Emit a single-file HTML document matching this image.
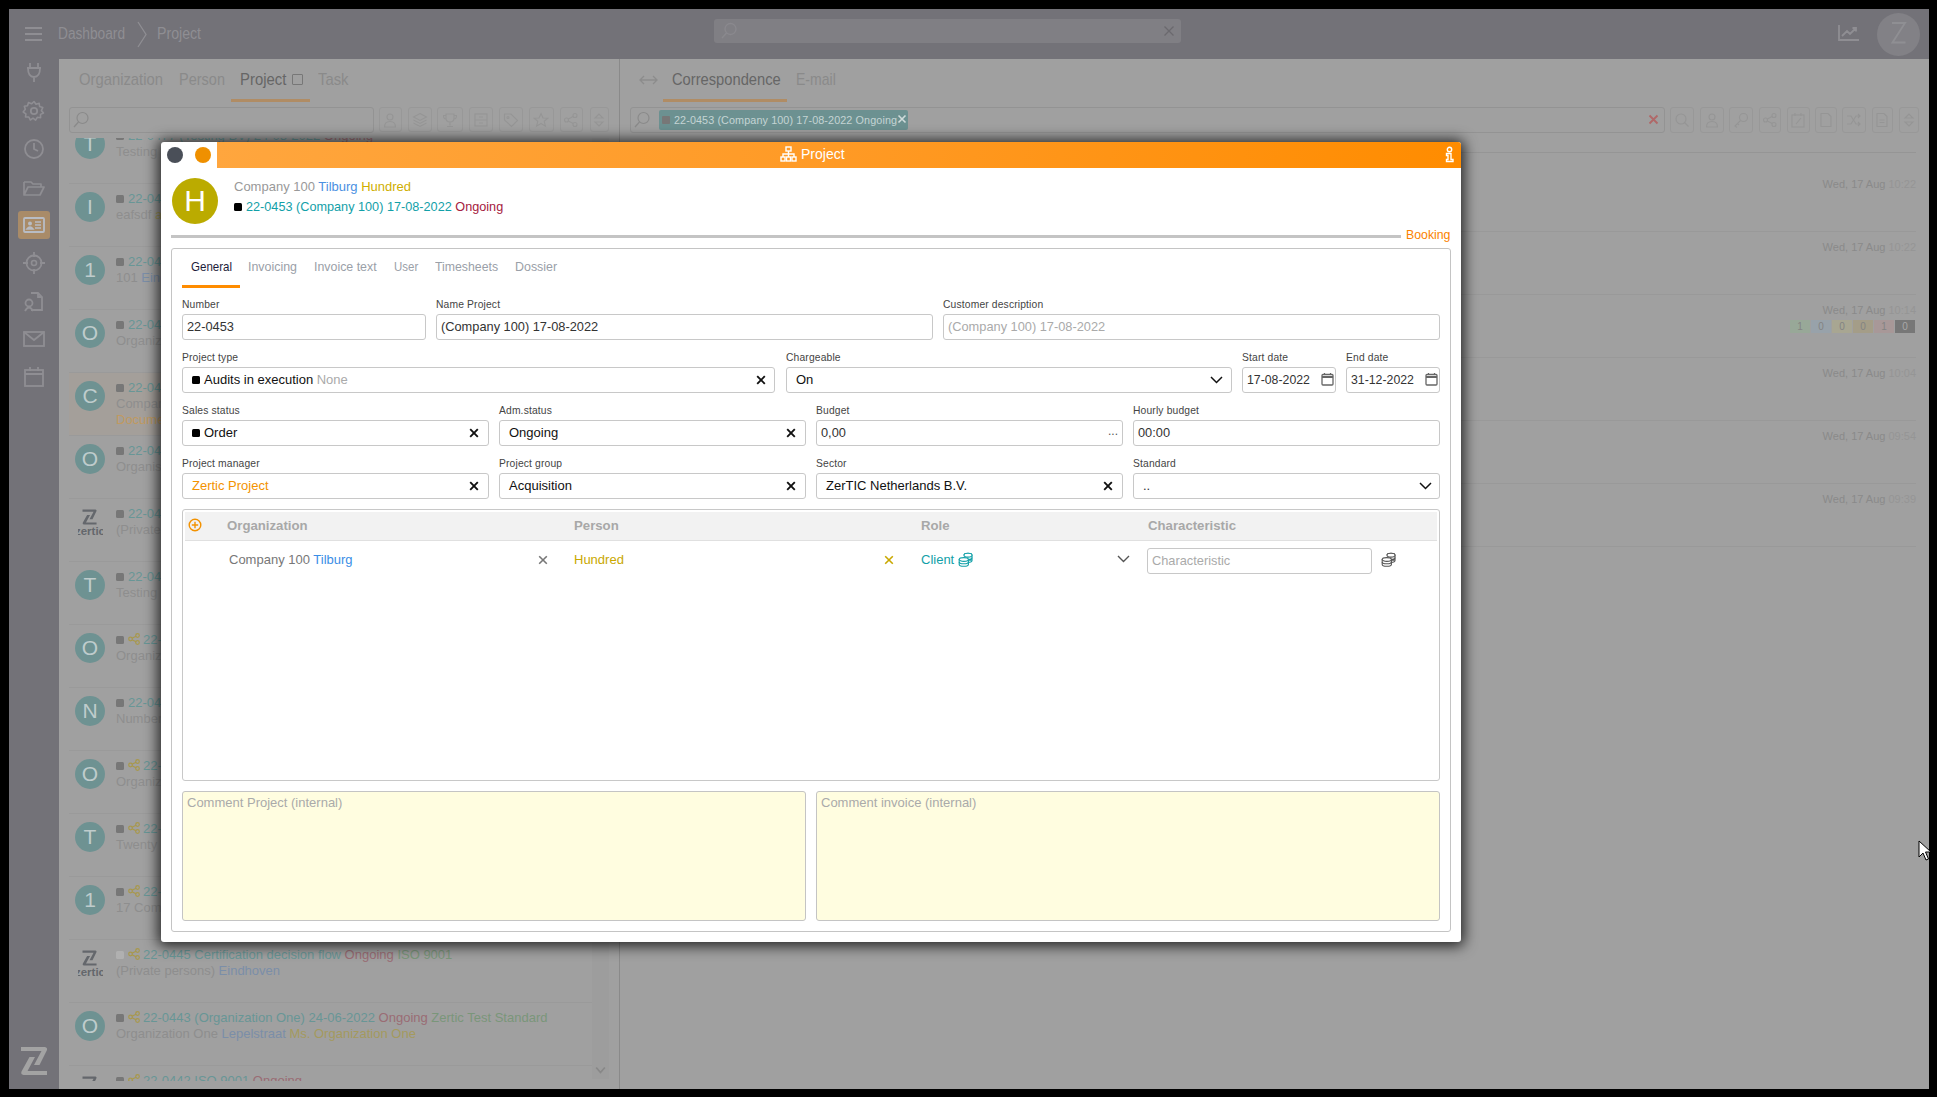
<!DOCTYPE html>
<html><head><meta charset="utf-8">
<style>
*{box-sizing:border-box;margin:0;padding:0}
html,body{width:1937px;height:1097px;overflow:hidden;background:#000;font-family:"Liberation Sans",sans-serif}
.a{position:absolute}
.nw{white-space:nowrap}
</style></head>
<body>
<div class="a" style="left:9px;top:9px;width:1920px;height:1080px;background:#a0a0a0"></div>
<!-- TOPBAR -->
<div class="a" style="left:9px;top:9px;width:1920px;height:50px;background:#737278"></div>
<div class="a" style="left:25px;top:27px;width:17px;height:2px;background:#8f8e93"></div>
<div class="a" style="left:25px;top:33px;width:17px;height:2px;background:#8f8e93"></div>
<div class="a" style="left:25px;top:39px;width:17px;height:2px;background:#8f8e93"></div>
<div class="a nw" style="left:58px;top:23.7px;font-size:16px;line-height:20px;color:#8f8e93;transform:scaleX(.856);transform-origin:left">Dashboard</div>
<svg class="a" style="left:136px;top:21px" width="12" height="27"><path d="M2 1 L10 13.5 L2 26" fill="none" stroke="#8f8e93" stroke-width="1.3"/></svg>
<div class="a nw" style="left:157px;top:23.7px;font-size:16px;line-height:20px;color:#8f8e93;transform:scaleX(.884);transform-origin:left">Project</div>
<div class="a" style="left:714px;top:19px;width:467px;height:24px;background:#807f84;border-radius:3px"></div>
<svg class="a" style="left:719px;top:21px" width="20" height="20"><circle cx="11.5" cy="8" r="5.5" fill="none" stroke="#8a898e" stroke-width="1.3"/><path d="M7.5 12 L3 17" stroke="#8a898e" stroke-width="1.4"/></svg>
<svg class="a" style="left:1163px;top:25px" width="12" height="12"><path d="M1.5 1.5 L10.5 10.5 M10.5 1.5 L1.5 10.5" stroke="#6a696e" stroke-width="1.3"/></svg>
<svg class="a" style="left:1837px;top:23px" width="24" height="20"><path d="M2 2 V17 H22" fill="none" stroke="#8f8e93" stroke-width="1.8"/><path d="M5 13 L10 8 L13 11 L19 5 M15.5 5 H19 V8.5" fill="none" stroke="#8f8e93" stroke-width="1.8"/></svg>
<div class="a" style="left:1877px;top:13px;width:43px;height:43px;border-radius:50%;background:#828186"></div>
<svg class="a" style="left:1877px;top:13px" width="43" height="43"><path d="M15 10 H28 L15.5 29.5 H28.5" fill="none" stroke="#8f8f93" stroke-width="1.9" stroke-linejoin="miter"/></svg>

<!-- SIDEBAR -->
<div class="a" style="left:9px;top:59px;width:50px;height:1030px;background:#737278"></div>
<svg class="a" style="left:22px;top:60px" width="24" height="24"><path d="M8 3 V8 M16 3 V8 M5 8 H19 M6 8 Q6 17 12 17 Q18 17 18 8 M12 17 V22" fill="none" stroke="#8f8e93" stroke-width="1.8"/></svg>
<svg class="a" style="left:22px;top:99px" width="24" height="24"><circle cx="12" cy="12" r="3.2" fill="none" stroke="#8f8e93" stroke-width="1.8"/><path d="M12 2.5 L14 5.2 L17.2 4.3 L17.6 7.5 L20.8 8.5 L19.4 11.6 L21.5 14 L18.5 15.4 L18.6 18.7 L15.3 18.3 L13.6 21.2 L11 19.2 L8.3 21 L6.8 18 L3.5 18 L3.9 14.8 L1.2 13 L3.3 10.3 L2.3 7.2 L5.5 6.7 L6.5 3.6 L9.5 4.8 Z" fill="none" stroke="#8f8e93" stroke-width="1.6" stroke-linejoin="round"/></svg>
<svg class="a" style="left:22px;top:137px" width="24" height="24"><circle cx="12" cy="12" r="9" fill="none" stroke="#8f8e93" stroke-width="1.8"/><path d="M12 6 V12 L16 14" fill="none" stroke="#8f8e93" stroke-width="1.8"/></svg>
<svg class="a" style="left:22px;top:176px" width="24" height="24"><path d="M2 6 H9 L11 8 H19 V11 M2 6 V19 H18 L22 11 H6 L2 19" fill="none" stroke="#8f8e93" stroke-width="1.7" stroke-linejoin="round"/></svg>
<div class="a" style="left:18px;top:211px;width:32px;height:28px;background:#a98b68;border-radius:3px"></div>
<svg class="a" style="left:22px;top:213px" width="24" height="24"><rect x="2" y="5" width="20" height="14" rx="1" fill="none" stroke="#b8bcc4" stroke-width="1.8"/><circle cx="8" cy="10.5" r="2" fill="#b8bcc4"/><path d="M5 16 Q8 12 11 16 Z M13 9 H19 M13 12 H19 M13 15 H19" stroke="#b8bcc4" stroke-width="1.6" fill="#b8bcc4"/></svg>
<svg class="a" style="left:22px;top:251px" width="24" height="24"><circle cx="12" cy="12" r="7.5" fill="none" stroke="#8f8e93" stroke-width="1.8"/><circle cx="12" cy="12" r="2.5" fill="none" stroke="#8f8e93" stroke-width="1.6"/><path d="M12 1 V6 M12 18 V23 M1 12 H6 M18 12 H23" stroke="#8f8e93" stroke-width="1.8"/></svg>
<svg class="a" style="left:22px;top:289px" width="24" height="24"><path d="M9 4 H16 L20 8 V21 H9 M16 4 V8 H20" fill="none" stroke="#8f8e93" stroke-width="1.8"/><circle cx="7" cy="14" r="3.5" fill="none" stroke="#8f8e93" stroke-width="1.8"/><path d="M3 22 Q7 15 11 22" fill="none" stroke="#8f8e93" stroke-width="1.8"/></svg>
<svg class="a" style="left:22px;top:327px" width="24" height="24"><rect x="2" y="5" width="20" height="14" fill="none" stroke="#8f8e93" stroke-width="1.8"/><path d="M2 5 L12 13 L22 5" fill="none" stroke="#8f8e93" stroke-width="1.8"/></svg>
<svg class="a" style="left:22px;top:365px" width="24" height="24"><rect x="3" y="5" width="18" height="16" fill="none" stroke="#8f8e93" stroke-width="1.8"/><path d="M3 9 H21 M8 2 V6 M16 2 V6" stroke="#8f8e93" stroke-width="1.8"/></svg>
<svg class="a" style="left:14px;top:1040px" width="40" height="40"><g fill="#a3a3a3"><path d="M7 7 H31 Q33.5 7.5 33 10 L25.5 25 H20 L27.5 11 H7 Z"/><path d="M15.5 17 H21 L13.5 31 H33 V35 H9.5 Q6.5 34.5 7.5 31.5 Z"/></g></svg>

<!-- LEFT PANEL -->
<div class="a" style="left:59px;top:138px;width:560px;height:943px;overflow:hidden">
<div class="a" style="left:10px;top:-18px;width:523px;height:1px;background:#9a9a9a"></div>
<div class="a" style="left:16px;top:-9px;width:30px;height:30px;border-radius:50%;background:#6e9292;color:#bfcccc;font-size:21px;line-height:30px;text-align:center">T</div>
<div class="a nw" style="left:57px;top:-10.5px;font-size:13px;line-height:16px"><span style="display:inline-block;width:8px;height:8px;border-radius:1.5px;background:#777;margin-right:4px;vertical-align:0px"></span><span style="color:#689696">22-0477 </span><span style="color:#689696">(Testing BV) 24-08-2022 </span><span style="color:#9a6c74">Ongoing</span></div>
<div class="a nw" style="left:57px;top:5.5px;font-size:13px;line-height:16px"><span style="color:#8e8e8e">Testing BV</span></div>
<div class="a" style="left:10px;top:45px;width:523px;height:1px;background:#9a9a9a"></div>
<div class="a" style="left:16px;top:54px;width:30px;height:30px;border-radius:50%;background:#6e9292;color:#bfcccc;font-size:21px;line-height:30px;text-align:center">I</div>
<div class="a nw" style="left:57px;top:52.5px;font-size:13px;line-height:16px"><span style="display:inline-block;width:8px;height:8px;border-radius:1.5px;background:#777;margin-right:4px;vertical-align:0px"></span><span style="color:#689696">22-0476 (eafsdf) 17-08-2022</span></div>
<div class="a nw" style="left:57px;top:68.5px;font-size:13px;line-height:16px"><span style="color:#8e8e8e">eafsdf </span><span style="color:#a49a5e">asdf</span></div>
<div class="a" style="left:10px;top:108px;width:523px;height:1px;background:#9a9a9a"></div>
<div class="a" style="left:16px;top:117px;width:30px;height:30px;border-radius:50%;background:#6e9292;color:#bfcccc;font-size:21px;line-height:30px;text-align:center">1</div>
<div class="a nw" style="left:57px;top:115.5px;font-size:13px;line-height:16px"><span style="display:inline-block;width:8px;height:8px;border-radius:1.5px;background:#777;margin-right:4px;vertical-align:0px"></span><span style="color:#689696">22-0475 (101 Eindhoven) 17-08-2022</span></div>
<div class="a nw" style="left:57px;top:131.5px;font-size:13px;line-height:16px"><span style="color:#8e8e8e">101 </span><span style="color:#7b8ea8">Eindhoven</span></div>
<div class="a" style="left:10px;top:171px;width:523px;height:1px;background:#9a9a9a"></div>
<div class="a" style="left:16px;top:180px;width:30px;height:30px;border-radius:50%;background:#6e9292;color:#bfcccc;font-size:21px;line-height:30px;text-align:center">O</div>
<div class="a nw" style="left:57px;top:178.5px;font-size:13px;line-height:16px"><span style="display:inline-block;width:8px;height:8px;border-radius:1.5px;background:#777;margin-right:4px;vertical-align:0px"></span><span style="color:#689696">22-0474 (Organization One) 17-08-2022</span></div>
<div class="a nw" style="left:57px;top:194.5px;font-size:13px;line-height:16px"><span style="color:#8e8e8e">Organization One</span></div>
<div class="a" style="left:10px;top:235px;width:533px;height:62px;background:#a49f9a"></div>
<div class="a" style="left:10px;top:234px;width:523px;height:1px;background:#9a9a9a"></div>
<div class="a" style="left:16px;top:243px;width:30px;height:30px;border-radius:50%;background:#6e9292;color:#bfcccc;font-size:21px;line-height:30px;text-align:center">C</div>
<div class="a nw" style="left:57px;top:241.5px;font-size:13px;line-height:16px"><span style="display:inline-block;width:8px;height:8px;border-radius:1.5px;background:#777;margin-right:4px;vertical-align:0px"></span><span style="color:#689696">22-0473 (Company 100) 17-08-2022</span></div>
<div class="a nw" style="left:57px;top:257.5px;font-size:13px;line-height:16px"><span style="color:#8e8e8e">Company 100</span></div>
<div class="a nw" style="left:57px;top:273.5px;font-size:13px;line-height:16px"><span style="color:#c09a60">Documents</span></div>
<div class="a" style="left:10px;top:297px;width:523px;height:1px;background:#9a9a9a"></div>
<div class="a" style="left:16px;top:306px;width:30px;height:30px;border-radius:50%;background:#6e9292;color:#bfcccc;font-size:21px;line-height:30px;text-align:center">O</div>
<div class="a nw" style="left:57px;top:304.5px;font-size:13px;line-height:16px"><span style="display:inline-block;width:8px;height:8px;border-radius:1.5px;background:#777;margin-right:4px;vertical-align:0px"></span><span style="color:#689696">22-0472 (Organisation) 17-08-2022</span></div>
<div class="a nw" style="left:57px;top:320.5px;font-size:13px;line-height:16px"><span style="color:#8e8e8e">Organisation</span></div>
<div class="a" style="left:10px;top:360px;width:523px;height:1px;background:#9a9a9a"></div>
<svg class="a" style="left:23px;top:371px" width="16" height="16"><g fill="#64676c" transform="translate(0.5,0.5) scale(0.54) translate(-7,-7)"><path d="M7 7 H31 Q33.5 7.5 33 10 L25.5 25 H20 L27.5 11 H7 Z"/><path d="M15.5 17 H21 L13.5 31 H33 V35 H9.5 Q6.5 34.5 7.5 31.5 Z"/></g></svg>
<div class="a nw" style="left:18.5px;top:387px;width:25px;height:13px;overflow:hidden;text-align:center;font-size:11.5px;font-weight:700;line-height:13px;color:#64676c"><span style="margin-left:-5px;margin-right:-5px">zertic</span></div>
<div class="a nw" style="left:57px;top:367.5px;font-size:13px;line-height:16px"><span style="display:inline-block;width:8px;height:8px;border-radius:1.5px;background:#777;margin-right:4px;vertical-align:0px"></span><span style="color:#689696">22-0471 (Private persons)</span></div>
<div class="a nw" style="left:57px;top:383.5px;font-size:13px;line-height:16px"><span style="color:#8e8e8e">(Private persons)</span></div>
<div class="a" style="left:10px;top:423px;width:523px;height:1px;background:#9a9a9a"></div>
<div class="a" style="left:16px;top:432px;width:30px;height:30px;border-radius:50%;background:#6e9292;color:#bfcccc;font-size:21px;line-height:30px;text-align:center">T</div>
<div class="a nw" style="left:57px;top:430.5px;font-size:13px;line-height:16px"><span style="display:inline-block;width:8px;height:8px;border-radius:1.5px;background:#777;margin-right:4px;vertical-align:0px"></span><span style="color:#689696">22-0470 (Testing BV)</span></div>
<div class="a nw" style="left:57px;top:446.5px;font-size:13px;line-height:16px"><span style="color:#8e8e8e">Testing BV</span></div>
<div class="a" style="left:10px;top:486px;width:523px;height:1px;background:#9a9a9a"></div>
<div class="a" style="left:16px;top:495px;width:30px;height:30px;border-radius:50%;background:#6e9292;color:#bfcccc;font-size:21px;line-height:30px;text-align:center">O</div>
<div class="a nw" style="left:57px;top:493.5px;font-size:13px;line-height:16px"><span style="display:inline-block;width:8px;height:8px;border-radius:1.5px;background:#777;margin-right:4px;vertical-align:0px"></span><svg width="12" height="12" style="vertical-align:-1px;margin-right:3px"><circle cx="9.5" cy="2.5" r="1.8" fill="none" stroke="#a8984c" stroke-width="1.2"/><circle cx="2.5" cy="6" r="1.8" fill="none" stroke="#a8984c" stroke-width="1.2"/><circle cx="9.5" cy="9.5" r="1.8" fill="none" stroke="#a8984c" stroke-width="1.2"/><path d="M4 5.2 L8 3.2 M4 6.8 L8 8.8" stroke="#a8984c" stroke-width="1.2"/></svg><span style="color:#689696">22-0469 (Organization One)</span></div>
<div class="a nw" style="left:57px;top:509.5px;font-size:13px;line-height:16px"><span style="color:#8e8e8e">Organization One</span></div>
<div class="a" style="left:10px;top:549px;width:523px;height:1px;background:#9a9a9a"></div>
<div class="a" style="left:16px;top:558px;width:30px;height:30px;border-radius:50%;background:#6e9292;color:#bfcccc;font-size:21px;line-height:30px;text-align:center">N</div>
<div class="a nw" style="left:57px;top:556.5px;font-size:13px;line-height:16px"><span style="display:inline-block;width:8px;height:8px;border-radius:1.5px;background:#777;margin-right:4px;vertical-align:0px"></span><span style="color:#689696">22-0468 (Number)</span></div>
<div class="a nw" style="left:57px;top:572.5px;font-size:13px;line-height:16px"><span style="color:#8e8e8e">Number</span></div>
<div class="a" style="left:10px;top:612px;width:523px;height:1px;background:#9a9a9a"></div>
<div class="a" style="left:16px;top:621px;width:30px;height:30px;border-radius:50%;background:#6e9292;color:#bfcccc;font-size:21px;line-height:30px;text-align:center">O</div>
<div class="a nw" style="left:57px;top:619.5px;font-size:13px;line-height:16px"><span style="display:inline-block;width:8px;height:8px;border-radius:1.5px;background:#777;margin-right:4px;vertical-align:0px"></span><svg width="12" height="12" style="vertical-align:-1px;margin-right:3px"><circle cx="9.5" cy="2.5" r="1.8" fill="none" stroke="#a8984c" stroke-width="1.2"/><circle cx="2.5" cy="6" r="1.8" fill="none" stroke="#a8984c" stroke-width="1.2"/><circle cx="9.5" cy="9.5" r="1.8" fill="none" stroke="#a8984c" stroke-width="1.2"/><path d="M4 5.2 L8 3.2 M4 6.8 L8 8.8" stroke="#a8984c" stroke-width="1.2"/></svg><span style="color:#689696">22-0467 (Organization One)</span></div>
<div class="a nw" style="left:57px;top:635.5px;font-size:13px;line-height:16px"><span style="color:#8e8e8e">Organization One</span></div>
<div class="a" style="left:10px;top:675px;width:523px;height:1px;background:#9a9a9a"></div>
<div class="a" style="left:16px;top:684px;width:30px;height:30px;border-radius:50%;background:#6e9292;color:#bfcccc;font-size:21px;line-height:30px;text-align:center">T</div>
<div class="a nw" style="left:57px;top:682.5px;font-size:13px;line-height:16px"><span style="display:inline-block;width:8px;height:8px;border-radius:1.5px;background:#777;margin-right:4px;vertical-align:0px"></span><svg width="12" height="12" style="vertical-align:-1px;margin-right:3px"><circle cx="9.5" cy="2.5" r="1.8" fill="none" stroke="#a8984c" stroke-width="1.2"/><circle cx="2.5" cy="6" r="1.8" fill="none" stroke="#a8984c" stroke-width="1.2"/><circle cx="9.5" cy="9.5" r="1.8" fill="none" stroke="#a8984c" stroke-width="1.2"/><path d="M4 5.2 L8 3.2 M4 6.8 L8 8.8" stroke="#a8984c" stroke-width="1.2"/></svg><span style="color:#689696">22-0466 (Twenty)</span></div>
<div class="a nw" style="left:57px;top:698.5px;font-size:13px;line-height:16px"><span style="color:#8e8e8e">Twenty</span></div>
<div class="a" style="left:10px;top:738px;width:523px;height:1px;background:#9a9a9a"></div>
<div class="a" style="left:16px;top:747px;width:30px;height:30px;border-radius:50%;background:#6e9292;color:#bfcccc;font-size:21px;line-height:30px;text-align:center">1</div>
<div class="a nw" style="left:57px;top:745.5px;font-size:13px;line-height:16px"><span style="display:inline-block;width:8px;height:8px;border-radius:1.5px;background:#777;margin-right:4px;vertical-align:0px"></span><svg width="12" height="12" style="vertical-align:-1px;margin-right:3px"><circle cx="9.5" cy="2.5" r="1.8" fill="none" stroke="#a8984c" stroke-width="1.2"/><circle cx="2.5" cy="6" r="1.8" fill="none" stroke="#a8984c" stroke-width="1.2"/><circle cx="9.5" cy="9.5" r="1.8" fill="none" stroke="#a8984c" stroke-width="1.2"/><path d="M4 5.2 L8 3.2 M4 6.8 L8 8.8" stroke="#a8984c" stroke-width="1.2"/></svg><span style="color:#689696">22-0465 (17 Company)</span></div>
<div class="a nw" style="left:57px;top:761.5px;font-size:13px;line-height:16px"><span style="color:#8e8e8e">17 Company</span></div>
<div class="a" style="left:10px;top:801px;width:523px;height:1px;background:#9a9a9a"></div>
<svg class="a" style="left:23px;top:812px" width="16" height="16"><g fill="#64676c" transform="translate(0.5,0.5) scale(0.54) translate(-7,-7)"><path d="M7 7 H31 Q33.5 7.5 33 10 L25.5 25 H20 L27.5 11 H7 Z"/><path d="M15.5 17 H21 L13.5 31 H33 V35 H9.5 Q6.5 34.5 7.5 31.5 Z"/></g></svg>
<div class="a nw" style="left:18.5px;top:828px;width:25px;height:13px;overflow:hidden;text-align:center;font-size:11.5px;font-weight:700;line-height:13px;color:#64676c"><span style="margin-left:-5px;margin-right:-5px">zertic</span></div>
<div class="a nw" style="left:57px;top:808.5px;font-size:13px;line-height:16px"><span style="display:inline-block;width:8px;height:8px;border-radius:1.5px;background:#b0b0b0;margin-right:4px;vertical-align:0px"></span><svg width="12" height="12" style="vertical-align:-1px;margin-right:3px"><circle cx="9.5" cy="2.5" r="1.8" fill="none" stroke="#a8984c" stroke-width="1.2"/><circle cx="2.5" cy="6" r="1.8" fill="none" stroke="#a8984c" stroke-width="1.2"/><circle cx="9.5" cy="9.5" r="1.8" fill="none" stroke="#a8984c" stroke-width="1.2"/><path d="M4 5.2 L8 3.2 M4 6.8 L8 8.8" stroke="#a8984c" stroke-width="1.2"/></svg><span style="color:#689696">22-0445 Certification decision flow </span><span style="color:#9a6c74">Ongoing </span><span style="color:#7a967a">ISO 9001</span></div>
<div class="a nw" style="left:57px;top:824.5px;font-size:13px;line-height:16px"><span style="color:#8e8e8e">(Private persons) </span><span style="color:#7b8ea8">Eindhoven</span></div>
<div class="a" style="left:10px;top:864px;width:523px;height:1px;background:#9a9a9a"></div>
<div class="a" style="left:16px;top:873px;width:30px;height:30px;border-radius:50%;background:#6e9292;color:#bfcccc;font-size:21px;line-height:30px;text-align:center">O</div>
<div class="a nw" style="left:57px;top:871.5px;font-size:13px;line-height:16px"><span style="display:inline-block;width:8px;height:8px;border-radius:1.5px;background:#777;margin-right:4px;vertical-align:0px"></span><svg width="12" height="12" style="vertical-align:-1px;margin-right:3px"><circle cx="9.5" cy="2.5" r="1.8" fill="none" stroke="#a8984c" stroke-width="1.2"/><circle cx="2.5" cy="6" r="1.8" fill="none" stroke="#a8984c" stroke-width="1.2"/><circle cx="9.5" cy="9.5" r="1.8" fill="none" stroke="#a8984c" stroke-width="1.2"/><path d="M4 5.2 L8 3.2 M4 6.8 L8 8.8" stroke="#a8984c" stroke-width="1.2"/></svg><span style="color:#689696">22-0443 (Organization One) 24-06-2022 </span><span style="color:#9a6c74">Ongoing </span><span style="color:#7a967a">Zertic Test Standard</span></div>
<div class="a nw" style="left:57px;top:887.5px;font-size:13px;line-height:16px"><span style="color:#8e8e8e">Organization One </span><span style="color:#7b8ea8">Lepelstraat </span><span style="color:#a49a5e">Ms. Organization One</span></div>
<div class="a" style="left:10px;top:927px;width:523px;height:1px;background:#9a9a9a"></div>
<svg class="a" style="left:23px;top:938px" width="16" height="16"><g fill="#64676c" transform="translate(0.5,0.5) scale(0.54) translate(-7,-7)"><path d="M7 7 H31 Q33.5 7.5 33 10 L25.5 25 H20 L27.5 11 H7 Z"/><path d="M15.5 17 H21 L13.5 31 H33 V35 H9.5 Q6.5 34.5 7.5 31.5 Z"/></g></svg>
<div class="a nw" style="left:18.5px;top:954px;width:25px;height:13px;overflow:hidden;text-align:center;font-size:11.5px;font-weight:700;line-height:13px;color:#64676c"><span style="margin-left:-5px;margin-right:-5px">zertic</span></div>
<div class="a nw" style="left:57px;top:934.5px;font-size:13px;line-height:16px"><span style="display:inline-block;width:8px;height:8px;border-radius:1.5px;background:#777;margin-right:4px;vertical-align:0px"></span><svg width="12" height="12" style="vertical-align:-1px;margin-right:3px"><circle cx="9.5" cy="2.5" r="1.8" fill="none" stroke="#a8984c" stroke-width="1.2"/><circle cx="2.5" cy="6" r="1.8" fill="none" stroke="#a8984c" stroke-width="1.2"/><circle cx="9.5" cy="9.5" r="1.8" fill="none" stroke="#a8984c" stroke-width="1.2"/><path d="M4 5.2 L8 3.2 M4 6.8 L8 8.8" stroke="#a8984c" stroke-width="1.2"/></svg><span style="color:#689696">22-0442 ISO 9001 </span><span style="color:#9a6c74">Ongoing</span></div>
<div class="a nw" style="left:57px;top:950.5px;font-size:13px;line-height:16px"><span style="color:#8e8e8e">Testing</span></div>
</div>
<div class="a" style="left:592px;top:138px;width:17px;height:941px;background:#9d9d9d"></div>
<svg class="a" style="left:595px;top:1066px" width="11" height="9"><path d="M1.2 1.5 L5.5 6.5 L9.8 1.5" fill="none" stroke="#888" stroke-width="1.7"/></svg>
<div class="a nw" style="left:79px;top:70.4px;font-size:17px;line-height:20px;color:#8a8a8a;transform:scaleX(.871);transform-origin:left">Organization</div>
<div class="a nw" style="left:178.5px;top:70.4px;font-size:17px;line-height:20px;color:#8a8a8a;transform:scaleX(.853);transform-origin:left">Person</div>
<div class="a nw" style="left:240px;top:70.4px;font-size:17px;line-height:20px;color:#666;transform:scaleX(.875);transform-origin:left">Project</div>
<div class="a" style="left:292px;top:74px;width:11px;height:11px;border:1.5px solid #777;border-radius:1px"></div>
<div class="a nw" style="left:318px;top:70.4px;font-size:17px;line-height:20px;color:#8a8a8a;transform:scaleX(.874);transform-origin:left">Task</div>
<div class="a" style="left:231px;top:99px;width:79px;height:3px;background:#b08c64"></div>
<div class="a" style="left:69px;top:107px;width:305px;height:26px;border:1px solid #939393;border-radius:3px"></div>
<svg class="a" style="left:72px;top:111px" width="18" height="18"><circle cx="10.5" cy="7" r="5.5" fill="none" stroke="#8a8a8a" stroke-width="1.2"/><path d="M6.5 11 L2 16" stroke="#8a8a8a" stroke-width="1.3"/></svg>
<div class="a" style="left:379px;top:107px;width:23px;height:25px;border:1px solid #989898;border-radius:3px"></div>
<svg class="a" style="left:382px;top:112px" width="16" height="16"><g fill="none" stroke="#959595" stroke-width="1.1"><circle cx="8" cy="5" r="3" /><path d="M2.5 15 Q2.5 9.5 8 9.5 Q13.5 9.5 13.5 15 Z"/></g></svg>
<div class="a" style="left:408px;top:107px;width:24px;height:25px;border:1px solid #989898;border-radius:3px"></div>
<svg class="a" style="left:412px;top:112px" width="16" height="16"><g fill="none" stroke="#959595" stroke-width="1.1"><path d="M8 1.5 L14.5 5 L8 8.5 L1.5 5 Z M1.5 8 L8 11.5 L14.5 8 M1.5 11 L8 14.5 L14.5 11"/></g></svg>
<div class="a" style="left:437px;top:107px;width:26px;height:25px;border:1px solid #989898;border-radius:3px"></div>
<svg class="a" style="left:442px;top:112px" width="16" height="16"><g fill="none" stroke="#959595" stroke-width="1.1"><path d="M4 2 H12 V6 Q12 10 8 10 Q4 10 4 6 Z M4 3.5 H1.5 Q1.5 7 4 7 M12 3.5 H14.5 Q14.5 7 12 7 M8 10 V13.5 M5 14.5 H11"/></g></svg>
<div class="a" style="left:469px;top:107px;width:24px;height:25px;border:1px solid #989898;border-radius:3px"></div>
<svg class="a" style="left:473px;top:112px" width="16" height="16"><g fill="none" stroke="#959595" stroke-width="1.1"><rect x="2" y="2" width="12" height="12"/><path d="M2 8 H14 M6 5 H10 M6 11 H10"/></g></svg>
<div class="a" style="left:499px;top:107px;width:24px;height:25px;border:1px solid #989898;border-radius:3px"></div>
<svg class="a" style="left:503px;top:112px" width="16" height="16"><g fill="none" stroke="#959595" stroke-width="1.1"><path d="M1.5 2 H8 L14.5 8.5 L8.5 14.5 L1.5 8 Z"/><circle cx="5" cy="5.5" r="1"/></g></svg>
<div class="a" style="left:529px;top:107px;width:25px;height:25px;border:1px solid #989898;border-radius:3px"></div>
<svg class="a" style="left:533px;top:112px" width="16" height="16"><g fill="none" stroke="#959595" stroke-width="1.1"><path d="M8 1.5 L10 6 L14.8 6.2 L11.2 9.3 L12.4 14.2 L8 11.5 L3.6 14.2 L4.8 9.3 L1.2 6.2 L6 6 Z"/></g></svg>
<div class="a" style="left:560px;top:107px;width:23px;height:25px;border:1px solid #989898;border-radius:3px"></div>
<svg class="a" style="left:563px;top:112px" width="16" height="16"><g fill="none" stroke="#959595" stroke-width="1.1"><circle cx="12" cy="3.5" r="2"/><circle cx="3.5" cy="8" r="2"/><circle cx="12" cy="12.5" r="2"/><path d="M5.3 7 L10.2 4.5 M5.3 9 L10.2 11.5"/></g></svg>
<div class="a" style="left:590px;top:107px;width:19px;height:25px;border:1px solid #989898;border-radius:3px"></div>
<svg class="a" style="left:591px;top:112px" width="16" height="16"><g fill="none" stroke="#959595" stroke-width="1.1"><path d="M4 6 L8 2 L12 6 Z M4 10 L8 14 L12 10 Z"/></g></svg>
<div class="a" style="left:619px;top:59px;width:1px;height:1030px;background:#8a8a8a"></div>
<!-- RIGHT PANEL -->
<svg class="a" style="left:639px;top:74px" width="19" height="12"><path d="M1 6 H18 M5 2 L1 6 L5 10 M14 2 L18 6 L14 10" fill="none" stroke="#8c8c8c" stroke-width="1.3"/></svg>
<div class="a nw" style="left:671.5px;top:70.4px;font-size:17px;line-height:20px;color:#666;transform:scaleX(.865);transform-origin:left">Correspondence</div>
<div class="a nw" style="left:795.5px;top:70.4px;font-size:17px;line-height:20px;color:#8a8a8a;transform:scaleX(.826);transform-origin:left">E-mail</div>
<div class="a" style="left:663px;top:99px;width:124px;height:3px;background:#b08c64"></div>
<div class="a" style="left:630px;top:107px;width:1035px;height:26px;border:1px solid #939393;border-radius:3px"></div>
<svg class="a" style="left:633px;top:111px" width="18" height="18"><circle cx="10.5" cy="7" r="5.5" fill="none" stroke="#8a8a8a" stroke-width="1.2"/><path d="M6.5 11 L2 16" stroke="#8a8a8a" stroke-width="1.3"/></svg>
<div class="a nw" style="left:659px;top:110px;width:249px;height:20px;background:#6c9191;border-radius:2px;font-size:10.8px;line-height:20px;color:#c4d4d4;padding-left:15px;letter-spacing:.1px">22-0453 (Company 100) 17-08-2022 Ongoing</div>
<div class="a" style="left:662px;top:116px;width:8px;height:8px;background:#777;border-radius:1px"></div>
<svg class="a" style="left:897px;top:114px" width="10" height="10"><path d="M1.5 1.5 L8.5 8.5 M8.5 1.5 L1.5 8.5" stroke="#d0dcdc" stroke-width="1.6"/></svg>
<svg class="a" style="left:1648px;top:114px" width="11" height="11"><path d="M1.5 1.5 L9.5 9.5 M9.5 1.5 L1.5 9.5" stroke="#b06868" stroke-width="1.8"/></svg>
<div class="a" style="left:1670px;top:107px;width:24px;height:26px;border:1px solid #989898;border-radius:3px"></div>
<svg class="a" style="left:1674px;top:112px" width="16" height="16"><g fill="none" stroke="#959595" stroke-width="1.1"><circle cx="7" cy="7" r="5"/><path d="M10.5 10.5 L14.5 14.5"/></g></svg>
<div class="a" style="left:1700px;top:107px;width:24px;height:26px;border:1px solid #989898;border-radius:3px"></div>
<svg class="a" style="left:1704px;top:112px" width="16" height="16"><g fill="none" stroke="#959595" stroke-width="1.1"><circle cx="8" cy="5" r="3" /><path d="M2.5 15 Q2.5 9.5 8 9.5 Q13.5 9.5 13.5 15 Z"/></g></svg>
<div class="a" style="left:1729px;top:107px;width:24px;height:26px;border:1px solid #989898;border-radius:3px"></div>
<svg class="a" style="left:1733px;top:112px" width="16" height="16"><g fill="none" stroke="#959595" stroke-width="1.1"><circle cx="10.5" cy="5.5" r="4"/><path d="M7.5 8.5 L2 14 L4 15.5 M4.5 11.5 L6 13"/></g></svg>
<div class="a" style="left:1759px;top:107px;width:22px;height:26px;border:1px solid #989898;border-radius:3px"></div>
<svg class="a" style="left:1762px;top:112px" width="16" height="16"><g fill="none" stroke="#959595" stroke-width="1.1"><circle cx="12" cy="3.5" r="2"/><circle cx="3.5" cy="8" r="2"/><circle cx="12" cy="12.5" r="2"/><path d="M5.3 7 L10.2 4.5 M5.3 9 L10.2 11.5"/></g></svg>
<div class="a" style="left:1787px;top:107px;width:23px;height:26px;border:1px solid #989898;border-radius:3px"></div>
<svg class="a" style="left:1790px;top:112px" width="16" height="16"><g fill="none" stroke="#959595" stroke-width="1.1"><rect x="2" y="3" width="12" height="12"/><path d="M5 1 V4 M11 1 V4 M6 12 L11 6"/></g></svg>
<div class="a" style="left:1815px;top:107px;width:22px;height:26px;border:1px solid #989898;border-radius:3px"></div>
<svg class="a" style="left:1818px;top:112px" width="16" height="16"><g fill="none" stroke="#959595" stroke-width="1.1"><path d="M3 1.5 H10 L13 4.5 V14.5 H3 Z"/></g></svg>
<div class="a" style="left:1842px;top:107px;width:24px;height:26px;border:1px solid #989898;border-radius:3px"></div>
<svg class="a" style="left:1846px;top:112px" width="16" height="16"><g fill="none" stroke="#959595" stroke-width="1.1"><path d="M1 4 H5 L10 12 H14 M1 12 H5 L10 4 H14 M12 2 L14 4 L12 6 M12 10 L14 12 L12 14"/></g></svg>
<div class="a" style="left:1872px;top:107px;width:21px;height:26px;border:1px solid #989898;border-radius:3px"></div>
<svg class="a" style="left:1874px;top:112px" width="16" height="16"><g fill="none" stroke="#959595" stroke-width="1.1"><path d="M3 1.5 H10 L13 4.5 V14.5 H3 Z M5.5 8 H10.5 M5.5 10.5 H10.5"/></g></svg>
<div class="a" style="left:1899px;top:107px;width:20px;height:26px;border:1px solid #989898;border-radius:3px"></div>
<svg class="a" style="left:1901px;top:112px" width="16" height="16"><g fill="none" stroke="#959595" stroke-width="1.1"><path d="M4 6 L8 2 L12 6 Z M4 10 L8 14 L12 10 Z"/></g></svg>
<div class="a" style="left:630px;top:152px;width:1286px;height:1px;background:#959595"></div>
<div class="a nw" style="left:1700px;top:177px;width:216px;text-align:right;font-size:11px;line-height:14px;color:#8a8a8a">Wed, 17 Aug <span style="color:#959595">10:22</span></div>
<div class="a" style="left:630px;top:231px;width:1286px;height:1px;background:#999"></div>
<div class="a nw" style="left:1700px;top:240px;width:216px;text-align:right;font-size:11px;line-height:14px;color:#8a8a8a">Wed, 17 Aug <span style="color:#959595">10:22</span></div>
<div class="a" style="left:630px;top:294px;width:1286px;height:1px;background:#999"></div>
<div class="a nw" style="left:1700px;top:303px;width:216px;text-align:right;font-size:11px;line-height:14px;color:#8a8a8a">Wed, 17 Aug <span style="color:#959595">10:14</span></div>
<div class="a" style="left:630px;top:357px;width:1286px;height:1px;background:#999"></div>
<div class="a nw" style="left:1700px;top:366px;width:216px;text-align:right;font-size:11px;line-height:14px;color:#8a8a8a">Wed, 17 Aug <span style="color:#959595">10:04</span></div>
<div class="a" style="left:630px;top:420px;width:1286px;height:1px;background:#999"></div>
<div class="a nw" style="left:1700px;top:429px;width:216px;text-align:right;font-size:11px;line-height:14px;color:#8a8a8a">Wed, 17 Aug <span style="color:#959595">09:54</span></div>
<div class="a" style="left:630px;top:483px;width:1286px;height:1px;background:#999"></div>
<div class="a nw" style="left:1700px;top:492px;width:216px;text-align:right;font-size:11px;line-height:14px;color:#8a8a8a">Wed, 17 Aug <span style="color:#959595">09:39</span></div>
<div class="a" style="left:630px;top:546px;width:1286px;height:1px;background:#999"></div>
<div class="a" style="left:1790px;top:320px;width:20px;height:13px;background:#98a898;font-size:10px;line-height:13px;text-align:center;color:#838383">1</div>
<div class="a" style="left:1811px;top:320px;width:20px;height:13px;background:#98a2aa;font-size:10px;line-height:13px;text-align:center;color:#838383">0</div>
<div class="a" style="left:1832px;top:320px;width:20px;height:13px;background:#a8a692;font-size:10px;line-height:13px;text-align:center;color:#838383">0</div>
<div class="a" style="left:1853px;top:320px;width:20px;height:13px;background:#a49d88;font-size:10px;line-height:13px;text-align:center;color:#838383">0</div>
<div class="a" style="left:1874px;top:320px;width:20px;height:13px;background:#a89898;font-size:10px;line-height:13px;text-align:center;color:#838383">1</div>
<div class="a" style="left:1895px;top:320px;width:20px;height:13px;background:#777777;font-size:10px;line-height:13px;text-align:center;color:#a8a8a8">0</div>
<!-- MODAL -->
<div class="a" style="left:161px;top:142px;width:1300px;height:800px;background:#fff;border-radius:3px;box-shadow:0 1px 14px 3px rgba(0,0,0,.78)"></div>
<div class="a" style="left:217px;top:142px;width:1244px;height:26px;background:linear-gradient(100deg,#ffa63e 0%,#ff9a25 50%,#ff8c00 100%);border-top-right-radius:3px"></div>
<div class="a" style="left:167px;top:147px;width:16px;height:16px;border-radius:50%;background:#4a4f58"></div>
<div class="a" style="left:195px;top:147px;width:16px;height:16px;border-radius:50%;background:#ef9000"></div>
<svg class="a" style="left:780px;top:146px" width="17" height="16"><g fill="none" stroke="#fff" stroke-width="1.4"><rect x="6" y="1" width="5" height="4"/><rect x="1" y="11" width="4" height="4"/><rect x="6.5" y="11" width="4" height="4"/><rect x="12" y="11" width="4" height="4"/><path d="M8.5 5 V11 M3 11 V8 H14 V11"/></g></svg>
<div class="a nw" style="left:801px;top:146px;font-size:14px;line-height:16px;color:#fff">Project</div>
<svg class="a" style="left:1444px;top:146px" width="11" height="17"><g fill="none" stroke="#fff" stroke-width="1.4"><circle cx="5.5" cy="3.5" r="2.2"/><path d="M2.5 7.5 H7 V13.5 H9 V15.5 H2.5 V13.5 H4 V9.5 H2.5 Z"/></g></svg>

<div class="a" style="left:172px;top:178px;width:46px;height:46px;border-radius:50%;background:#bbab00;color:#fff;font-size:30px;line-height:46px;text-align:center">H</div>
<div class="a nw" style="left:234px;top:179px;font-size:13px;line-height:15px"><span style="color:#999">Company 100 </span><span style="color:#4a90e2">Tilburg </span><span style="color:#cfae00">Hundred</span></div>
<div class="a" style="left:234px;top:203px;width:8px;height:8px;border-radius:1.5px;background:#000"></div>
<div class="a nw" style="left:246px;top:199px;font-size:13px;line-height:15px;transform:scaleX(.975);transform-origin:left"><span style="color:#12a0a8">22-0453 (Company 100) 17-08-2022 </span><span style="color:#a52040">Ongoing</span></div>
<div class="a" style="left:171px;top:235px;width:1230px;height:3px;background:#c4c4c4"></div>
<div class="a nw" style="left:1406px;top:228px;font-size:12.3px;line-height:14px;color:#fb8200">Booking</div>

<!-- FIELDSET -->
<div class="a" style="left:171px;top:248px;width:1280px;height:684px;border:1px solid #c4c4c4;border-radius:3px"></div>
<div class="a nw" style="left:190.5px;top:259.2px;font-size:13.5px;line-height:16px;color:#1c1c3a;transform:scaleX(0.854);transform-origin:left">General</div>
<div class="a nw" style="left:248.3px;top:259.2px;font-size:13.5px;line-height:16px;color:#9aa0a8;transform:scaleX(0.92);transform-origin:left">Invoicing</div>
<div class="a nw" style="left:314.3px;top:259.2px;font-size:13.5px;line-height:16px;color:#9aa0a8;transform:scaleX(0.917);transform-origin:left">Invoice text</div>
<div class="a nw" style="left:393.6px;top:259.2px;font-size:13.5px;line-height:16px;color:#9aa0a8;transform:scaleX(0.85);transform-origin:left">User</div>
<div class="a nw" style="left:434.9px;top:259.2px;font-size:13.5px;line-height:16px;color:#9aa0a8;transform:scaleX(0.91);transform-origin:left">Timesheets</div>
<div class="a nw" style="left:515px;top:259.2px;font-size:13.5px;line-height:16px;color:#9aa0a8;transform:scaleX(0.92);transform-origin:left">Dossier</div>
<div class="a" style="left:182px;top:285px;width:58px;height:3px;background:#ff8c00"></div>

<!-- FORM -->
<div class="a nw" style="left:182px;top:298.5px;font-size:10.3px;line-height:12px;color:#444;letter-spacing:.15px">Number</div>
<div class="a" style="left:182px;top:314px;width:244px;height:26px;border:1px solid #c8c8c8;border-radius:3px"></div>
<div class="a nw" style="left:187px;top:314px;font-size:12.8px;line-height:26px;color:#333;">22-0453</div>
<div class="a nw" style="left:436px;top:298.5px;font-size:10.3px;line-height:12px;color:#444;letter-spacing:.15px">Name Project</div>
<div class="a" style="left:436px;top:314px;width:497px;height:26px;border:1px solid #c8c8c8;border-radius:3px"></div>
<div class="a nw" style="left:441px;top:314px;font-size:12.8px;line-height:26px;color:#333;">(Company 100) 17-08-2022</div>
<div class="a nw" style="left:943px;top:298.5px;font-size:10.3px;line-height:12px;color:#444;letter-spacing:.15px">Customer description</div>
<div class="a" style="left:943px;top:314px;width:497px;height:26px;border:1px solid #c8c8c8;border-radius:3px"></div>
<div class="a nw" style="left:948px;top:314px;font-size:12.8px;line-height:26px;color:#aaa;">(Company 100) 17-08-2022</div>
<div class="a nw" style="left:182px;top:351.5px;font-size:10.3px;line-height:12px;color:#444;letter-spacing:.15px">Project type</div>
<div class="a" style="left:182px;top:367px;width:593px;height:26px;border:1px solid #c8c8c8;border-radius:3px"></div>
<div class="a" style="left:192px;top:376px;width:8px;height:8px;border-radius:1.5px;background:#000"></div><div class="a nw" style="left:204px;top:367px;font-size:13px;line-height:26px;color:#111;">Audits in execution <span style="color:#aaa">None</span></div>
<svg class="a" style="left:756px;top:375px" width="10" height="10"><path d="M1.2 1.2 L8.8 8.8 M8.8 1.2 L1.2 8.8" stroke="#111" stroke-width="1.9"/></svg>
<div class="a nw" style="left:786px;top:351.5px;font-size:10.3px;line-height:12px;color:#444;letter-spacing:.15px">Chargeable</div>
<div class="a" style="left:786px;top:367px;width:446px;height:26px;border:1px solid #c8c8c8;border-radius:3px"></div>
<div class="a nw" style="left:796px;top:367px;font-size:13px;line-height:26px;color:#111;">On</div>
<svg class="a" style="left:1210px;top:376px" width="13" height="8"><path d="M1 1 L6.5 6.5 L12 1" fill="none" stroke="#111" stroke-width="1.5"/></svg>
<div class="a nw" style="left:1242px;top:351.5px;font-size:10.3px;line-height:12px;color:#444;letter-spacing:.15px">Start date</div>
<div class="a" style="left:1242px;top:367px;width:94px;height:26px;border:1px solid #c8c8c8;border-radius:3px"></div>
<div class="a nw" style="left:1247px;top:367px;font-size:12.3px;line-height:26px;color:#333;">17-08-2022</div>
<svg class="a" style="left:1321px;top:372px" width="13" height="14"><rect x="1" y="2.5" width="11" height="10.5" rx="1" fill="none" stroke="#666" stroke-width="1.3"/><path d="M1 5 H12" stroke="#666" stroke-width="2"/><path d="M3.5 1 V3 M9.5 1 V3" stroke="#666" stroke-width="1.2"/></svg>
<div class="a nw" style="left:1346px;top:351.5px;font-size:10.3px;line-height:12px;color:#444;letter-spacing:.15px">End date</div>
<div class="a" style="left:1346px;top:367px;width:94px;height:26px;border:1px solid #c8c8c8;border-radius:3px"></div>
<div class="a nw" style="left:1351px;top:367px;font-size:12.3px;line-height:26px;color:#333;">31-12-2022</div>
<svg class="a" style="left:1425px;top:372px" width="13" height="14"><rect x="1" y="2.5" width="11" height="10.5" rx="1" fill="none" stroke="#666" stroke-width="1.3"/><path d="M1 5 H12" stroke="#666" stroke-width="2"/><path d="M3.5 1 V3 M9.5 1 V3" stroke="#666" stroke-width="1.2"/></svg>
<div class="a nw" style="left:182px;top:404.5px;font-size:10.3px;line-height:12px;color:#444;letter-spacing:.15px">Sales status</div>
<div class="a" style="left:182px;top:420px;width:307px;height:26px;border:1px solid #c8c8c8;border-radius:3px"></div>
<div class="a" style="left:192px;top:429px;width:8px;height:8px;border-radius:1.5px;background:#000"></div><div class="a nw" style="left:204px;top:420px;font-size:13px;line-height:26px;color:#111;">Order</div>
<svg class="a" style="left:469px;top:428px" width="10" height="10"><path d="M1.2 1.2 L8.8 8.8 M8.8 1.2 L1.2 8.8" stroke="#111" stroke-width="1.9"/></svg>
<div class="a nw" style="left:499px;top:404.5px;font-size:10.3px;line-height:12px;color:#444;letter-spacing:.15px">Adm.status</div>
<div class="a" style="left:499px;top:420px;width:307px;height:26px;border:1px solid #c8c8c8;border-radius:3px"></div>
<div class="a nw" style="left:509px;top:420px;font-size:13px;line-height:26px;color:#111;">Ongoing</div>
<svg class="a" style="left:786px;top:428px" width="10" height="10"><path d="M1.2 1.2 L8.8 8.8 M8.8 1.2 L1.2 8.8" stroke="#111" stroke-width="1.9"/></svg>
<div class="a nw" style="left:816px;top:404.5px;font-size:10.3px;line-height:12px;color:#444;letter-spacing:.15px">Budget</div>
<div class="a" style="left:816px;top:420px;width:307px;height:26px;border:1px solid #c8c8c8;border-radius:3px"></div>
<div class="a nw" style="left:821px;top:420px;font-size:12.8px;line-height:26px;color:#333;">0,00</div>
<div class="a nw" style="left:1108px;top:418px;font-size:12px;line-height:26px;color:#555;">...</div>
<div class="a nw" style="left:1133px;top:404.5px;font-size:10.3px;line-height:12px;color:#444;letter-spacing:.15px">Hourly budget</div>
<div class="a" style="left:1133px;top:420px;width:307px;height:26px;border:1px solid #c8c8c8;border-radius:3px"></div>
<div class="a nw" style="left:1138px;top:420px;font-size:12.8px;line-height:26px;color:#333;">00:00</div>
<div class="a nw" style="left:182px;top:457.5px;font-size:10.3px;line-height:12px;color:#444;letter-spacing:.15px">Project manager</div>
<div class="a" style="left:182px;top:473px;width:307px;height:26px;border:1px solid #c8c8c8;border-radius:3px"></div>
<div class="a nw" style="left:192px;top:473px;font-size:13px;line-height:26px;color:#f39200;">Zertic Project</div>
<svg class="a" style="left:469px;top:481px" width="10" height="10"><path d="M1.2 1.2 L8.8 8.8 M8.8 1.2 L1.2 8.8" stroke="#111" stroke-width="1.9"/></svg>
<div class="a nw" style="left:499px;top:457.5px;font-size:10.3px;line-height:12px;color:#444;letter-spacing:.15px">Project group</div>
<div class="a" style="left:499px;top:473px;width:307px;height:26px;border:1px solid #c8c8c8;border-radius:3px"></div>
<div class="a nw" style="left:509px;top:473px;font-size:13px;line-height:26px;color:#111;">Acquisition</div>
<svg class="a" style="left:786px;top:481px" width="10" height="10"><path d="M1.2 1.2 L8.8 8.8 M8.8 1.2 L1.2 8.8" stroke="#111" stroke-width="1.9"/></svg>
<div class="a nw" style="left:816px;top:457.5px;font-size:10.3px;line-height:12px;color:#444;letter-spacing:.15px">Sector</div>
<div class="a" style="left:816px;top:473px;width:307px;height:26px;border:1px solid #c8c8c8;border-radius:3px"></div>
<div class="a nw" style="left:826px;top:473px;font-size:13px;line-height:26px;color:#111;">ZerTIC Netherlands B.V.</div>
<svg class="a" style="left:1103px;top:481px" width="10" height="10"><path d="M1.2 1.2 L8.8 8.8 M8.8 1.2 L1.2 8.8" stroke="#111" stroke-width="1.9"/></svg>
<div class="a nw" style="left:1133px;top:457.5px;font-size:10.3px;line-height:12px;color:#444;letter-spacing:.15px">Standard</div>
<div class="a" style="left:1133px;top:473px;width:307px;height:26px;border:1px solid #c8c8c8;border-radius:3px"></div>
<div class="a nw" style="left:1143px;top:473px;font-size:13px;line-height:26px;color:#333;">..</div>
<svg class="a" style="left:1419px;top:482px" width="13" height="8"><path d="M1 1 L6.5 6.5 L12 1" fill="none" stroke="#111" stroke-width="1.5"/></svg>
<div class="a" style="left:182px;top:509px;width:1258px;height:272px;border:1px solid #c8c8c8;border-radius:3px"></div>
<div class="a" style="left:185px;top:512px;width:1252px;height:29px;background:#f2f2f2;border-bottom:1px solid #e0e0e0"></div>
<svg class="a" style="left:188px;top:518px" width="14" height="14"><circle cx="7" cy="7" r="5.8" fill="none" stroke="#f39200" stroke-width="1.4"/><path d="M7 3.8 V10.2 M3.8 7 H10.2" stroke="#f39200" stroke-width="1.4"/></svg>
<div class="a nw" style="left:227px;top:518px;font-size:13.2px;line-height:16px;font-weight:700;color:#a8a8a8">Organization</div>
<div class="a nw" style="left:574px;top:518px;font-size:13.2px;line-height:16px;font-weight:700;color:#a8a8a8">Person</div>
<div class="a nw" style="left:921px;top:518px;font-size:13.2px;line-height:16px;font-weight:700;color:#a8a8a8">Role</div>
<div class="a nw" style="left:1148px;top:518px;font-size:13.2px;line-height:16px;font-weight:700;color:#a8a8a8">Characteristic</div>
<div class="a nw" style="left:229px;top:552px;font-size:13px;line-height:16px"><span style="color:#777">Company 100 </span><span style="color:#3a8ee6">Tilburg</span></div>
<svg class="a" style="left:538px;top:555px" width="10" height="10"><path d="M1.2 1.2 L8.8 8.8 M8.8 1.2 L1.2 8.8" stroke="#777" stroke-width="1.6"/></svg>
<div class="a nw" style="left:574px;top:552px;font-size:13px;line-height:16px;color:#c9a800">Hundred</div>
<svg class="a" style="left:884px;top:555px" width="10" height="10"><path d="M1.2 1.2 L8.8 8.8 M8.8 1.2 L1.2 8.8" stroke="#c9a800" stroke-width="1.6"/></svg>
<div class="a nw" style="left:921px;top:552px;font-size:13px;line-height:16px;color:#12a0a8">Client</div>
<svg class="a" style="left:958px;top:552px" width="15" height="15"><g fill="#fff" stroke="#12a0a8" stroke-width="1.1"><path d="M6 3.2 A4 1.9 0 0 1 14 3.2 V8.6 A4 1.9 0 0 1 10 10.5"/><ellipse cx="10" cy="3.2" rx="4" ry="1.9"/><path d="M6 5.5 A4 1.9 0 0 0 14 5.5 M9 7.8 A4 1.9 0 0 0 14 7.8" fill="none"/><path d="M1.2 7.5 V12.4 A4.6 1.9 0 0 0 10.4 12.4 V7.5 Z"/><ellipse cx="5.8" cy="7.5" rx="4.6" ry="1.9"/><path d="M1.2 9.9 A4.6 1.9 0 0 0 10.4 9.9" fill="none"/></g></svg>
<svg class="a" style="left:1117px;top:555px" width="13" height="8"><path d="M1 1 L6.5 6.5 L12 1" fill="none" stroke="#555" stroke-width="1.4"/></svg>
<div class="a" style="left:1147px;top:548px;width:225px;height:26px;border:1px solid #c8c8c8;border-radius:3px"></div>
<div class="a nw" style="left:1152px;top:548px;font-size:12.8px;line-height:26px;color:#aaa">Characteristic</div>
<svg class="a" style="left:1381px;top:552px" width="15" height="15"><g fill="#fff" stroke="#555" stroke-width="1.1"><path d="M6 3.2 A4 1.9 0 0 1 14 3.2 V8.6 A4 1.9 0 0 1 10 10.5"/><ellipse cx="10" cy="3.2" rx="4" ry="1.9"/><path d="M6 5.5 A4 1.9 0 0 0 14 5.5 M9 7.8 A4 1.9 0 0 0 14 7.8" fill="none"/><path d="M1.2 7.5 V12.4 A4.6 1.9 0 0 0 10.4 12.4 V7.5 Z"/><ellipse cx="5.8" cy="7.5" rx="4.6" ry="1.9"/><path d="M1.2 9.9 A4.6 1.9 0 0 0 10.4 9.9" fill="none"/></g></svg>
<div class="a" style="left:182px;top:791px;width:624px;height:130px;border:1px solid #c4c4c4;border-radius:3px;background:#fffde0"></div>
<div class="a nw" style="left:187px;top:795px;font-size:13px;line-height:16px;color:#aaa">Comment Project (internal)</div>
<div class="a" style="left:816px;top:791px;width:624px;height:130px;border:1px solid #c4c4c4;border-radius:3px;background:#fffde0"></div>
<div class="a nw" style="left:821px;top:795px;font-size:13px;line-height:16px;color:#aaa">Comment invoice (internal)</div>
<svg class="a" style="left:1918px;top:840px" width="14" height="22"><path d="M1 1 V17 L5 13 L8 20 L10.5 19 L7.5 12 H13 Z" fill="#fff" stroke="#000" stroke-width="1"/></svg>
</body></html>
